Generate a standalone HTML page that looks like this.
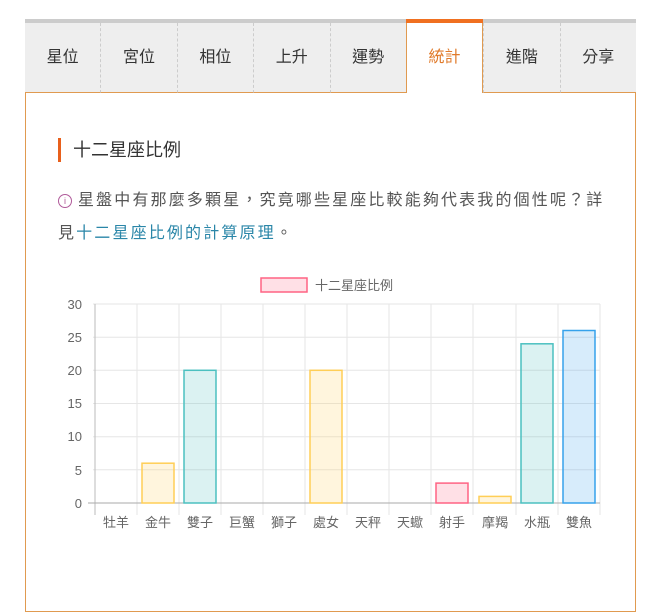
<!DOCTYPE html>
<html><head><meta charset="utf-8"><style>
body{margin:0;width:656px;height:560px;background:#fff;font-family:"Liberation Sans","Noto Sans CJK TC",sans-serif;overflow:hidden;position:relative}
.tabs{position:absolute;left:25px;top:19px;width:611px;height:74px;border-top:4px solid #ccc;box-sizing:border-box;display:flex;background:#eee}
.tab{flex:1;text-align:center;line-height:70px;font-size:16px;color:#333;border-left:1px dashed #ccc;box-sizing:border-box;border-bottom:1px solid #e09a50}
.tab:first-child{border-left:none}
.tab.act{background:#fff;color:#e07a2a;border:1px solid #e09a50;border-bottom:none;border-top:none;position:relative}
.tab.act:before{content:"";position:absolute;left:-1px;right:-1px;top:-4px;height:4px;background:#f07020}
.panel{position:absolute;left:25px;top:92px;width:611px;height:520px;border:1px solid #e09a50;border-top:none;box-sizing:border-box}
h2{position:absolute;left:58px;top:138px;margin:0;border-left:3px solid #e8601c;padding-left:12px;font-size:18px;font-weight:normal;line-height:24px;color:#333}
.info{position:absolute;left:58px;top:184px;width:600px;font-size:16px;line-height:33px;color:#555;letter-spacing:2.15px;white-space:nowrap}
.info a{color:#2a86a8;text-decoration:none}
.i{display:inline-block;width:12px;height:12px;border:1px solid #b05a9a;border-radius:50%;font-size:9px;line-height:12px;text-align:center;color:#b05a9a;vertical-align:1px;margin-right:6px;letter-spacing:0}
</style></head><body>
<div class="tabs"><div class="tab">星位</div><div class="tab">宮位</div><div class="tab">相位</div><div class="tab">上升</div><div class="tab">運勢</div><div class="tab act">統計</div><div class="tab">進階</div><div class="tab">分享</div></div>
<div class="panel"></div>
<h2>十二星座比例</h2>
<div class="info"><span class="i">i</span>星盤中有那麼多顆星，究竟哪些星座比較能夠代表我的個性呢？詳<br>見<a>十二星座比例的計算原理</a>。</div>
<svg style="position:absolute;left:0;top:0" width="656" height="560" font-family="Liberation Sans,Noto Sans CJK TC,sans-serif">
<rect x="261" y="278" width="46" height="14" fill="rgba(255,99,132,0.2)" stroke="rgb(255,99,132)" stroke-width="1.5"/>
<text x="315" y="290" font-size="13" fill="#666">十二星座比例</text>
<g stroke="#e6e6e6" stroke-width="1">
<line x1="93" y1="304" x2="600" y2="304"/><line x1="93" y1="337.2" x2="600" y2="337.2"/><line x1="93" y1="370.3" x2="600" y2="370.3"/><line x1="93" y1="403.5" x2="600" y2="403.5"/><line x1="93" y1="436.7" x2="600" y2="436.7"/><line x1="93" y1="469.8" x2="600" y2="469.8"/>
<line x1="137" y1="304" x2="137" y2="515"/><line x1="179" y1="304" x2="179" y2="515"/><line x1="221" y1="304" x2="221" y2="515"/><line x1="263" y1="304" x2="263" y2="515"/><line x1="305" y1="304" x2="305" y2="515"/><line x1="347" y1="304" x2="347" y2="515"/><line x1="389" y1="304" x2="389" y2="515"/><line x1="431" y1="304" x2="431" y2="515"/><line x1="473" y1="304" x2="473" y2="515"/><line x1="516" y1="304" x2="516" y2="515"/><line x1="558" y1="304" x2="558" y2="515"/><line x1="600" y1="304" x2="600" y2="515"/>
</g>
<line x1="95" y1="304" x2="95" y2="515" stroke="#bbb"/>
<line x1="88" y1="503" x2="600" y2="503" stroke="#aaa"/>
<g font-size="13" fill="#666" text-anchor="end">
<text x="82" y="309">30</text><text x="82" y="342">25</text><text x="82" y="375">20</text><text x="82" y="408">15</text><text x="82" y="441">10</text><text x="82" y="475">5</text><text x="82" y="508">0</text>
</g>
<g stroke-width="1.5">
<rect x="142" y="463.2" width="32" height="39.8" fill="rgba(255,206,86,0.2)" stroke="rgb(255,206,86)"/>
<rect x="184" y="370.3" width="32" height="132.7" fill="rgba(75,192,192,0.2)" stroke="rgb(75,192,192)"/>
<rect x="310" y="370.3" width="32" height="132.7" fill="rgba(255,206,86,0.2)" stroke="rgb(255,206,86)"/>
<rect x="436" y="483.1" width="32" height="19.9" fill="rgba(255,99,132,0.2)" stroke="rgb(255,99,132)"/>
<rect x="479" y="496.4" width="32" height="6.6" fill="rgba(255,206,86,0.2)" stroke="rgb(255,206,86)"/>
<rect x="521" y="343.8" width="32" height="159.2" fill="rgba(75,192,192,0.2)" stroke="rgb(75,192,192)"/>
<rect x="563" y="330.5" width="32" height="172.5" fill="rgba(54,162,235,0.2)" stroke="rgb(54,162,235)"/>
</g>
<g font-size="13" fill="#666" text-anchor="middle">
<text x="116" y="527">牡羊</text><text x="158" y="527">金牛</text><text x="200" y="527">雙子</text><text x="242" y="527">巨蟹</text><text x="284" y="527">獅子</text><text x="326" y="527">處女</text><text x="368" y="527">天秤</text><text x="410" y="527">天蠍</text><text x="452" y="527">射手</text><text x="495" y="527">摩羯</text><text x="537" y="527">水瓶</text><text x="579" y="527">雙魚</text>
</g>
</svg>
</body></html>
